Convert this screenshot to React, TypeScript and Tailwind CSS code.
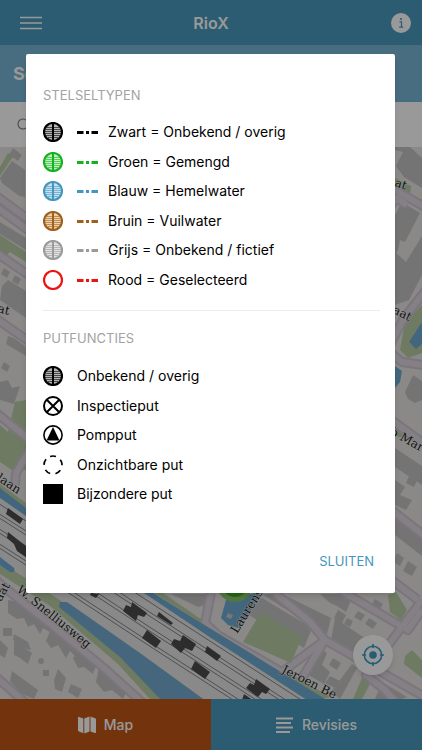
import React from "react";

const systemTypes = [
  { color: "#000000", fill: "#b5b5b5", label: "Zwart = Onbekend / overig" },
  { color: "#14b31c", fill: "#c4efc4", label: "Groen = Gemengd" },
  { color: "#4596bf", fill: "#c8e2f0", label: "Blauw = Hemelwater" },
  { color: "#a0601c", fill: "#ecd3b0", label: "Bruin = Vuilwater" },
  { color: "#9b9b9b", fill: "#e2e2e2", label: "Grijs = Onbekend / fictief" },
  { color: "#ee1313", fill: "", label: "Rood = Geselecteerd" },
];

function HatchedCircle({ color, fill }: { color: string; fill: string }) {
  return (
    <svg className="size-5 shrink-0" viewBox="0 0 20 20" aria-hidden="true">
      <circle cx="10" cy="10" r="9" fill={fill || "none"} stroke={color} strokeWidth="2.2" />
      {fill && (
        <>
          <path d="M4 5.5h12M3 7.5h14M2 9.5h16M2 11.5h16M3 13.5h14M5 15.5h10" stroke={color} strokeWidth="0.6" />
          <path d="M10 1v18" stroke={color} strokeWidth="2" />
        </>
      )}
    </svg>
  );
}

function DashLine({ color }: { color: string }) {
  return (
    <svg className="w-[21px] h-5 shrink-0" viewBox="0 0 21 20" aria-hidden="true">
      <path d="M0 10.5h6.5M9 10.5h3M14.5 10.5h6.5" stroke={color} strokeWidth="3" />
    </svg>
  );
}

const manholes = [
  { label: "Onbekend / overig", icon: <HatchedCircle color="#000000" fill="#b5b5b5" /> },
  {
    label: "Inspectieput",
    icon: (
      <svg className="size-5 shrink-0" viewBox="0 0 20 20" fill="none" stroke="#000" strokeWidth="2">
        <circle cx="10" cy="10" r="9" />
        <path d="M4 4l12 12M16 4L4 16" />
      </svg>
    ),
  },
  {
    label: "Pompput",
    icon: (
      <svg className="size-5 shrink-0" viewBox="0 0 20 20" fill="none" stroke="#000" strokeWidth="1.6">
        <circle cx="10" cy="10" r="9.1" />
        <path d="M10 2l6.5 13.5h-13z" fill="#000" stroke="none" />
      </svg>
    ),
  },
  {
    label: "Onzichtbare put",
    icon: (
      <svg className="size-5 shrink-0" viewBox="0 0 20 20" fill="none" stroke="#000" strokeWidth="1.7">
        <circle cx="10" cy="10" r="9" strokeDasharray="6 5.31" transform="rotate(-109 10 10)" />
      </svg>
    ),
  },
  {
    label: "Bijzondere put",
    icon: (
      <svg className="size-5 shrink-0" viewBox="0 0 20 20">
        <path d="M0 0h20v20H0z" />
      </svg>
    ),
  },
];

const greens = [
  "M0 167L8 153L14 155L0 176z",
  "M0 235L26 252V262L10 252L0 262z",
  "M15 402L26 400V470L12 470L0 462V425L8 432z",
  "M0 484L26 503L160 591L211 626L330 697L322 699L0 496z",
  "M49 593L61 601L120 656L162 699L150 699L118 664L50 606L0 574V562z",
  "M388 595L396 592L407 610L401 620L390 612z",
  "M364 673L374 676L362 699L353 699z",
  "M405 656L412 650L422 660V678L404 664z",
  "M395 178L411 186L410 194L395 186z",
  "M400 350L405 322L422 305V353L408 358z",
  "M395 428L405 432L414 440L395 436z",
];

const buildings = [
  "M0 178L12 161L25 170V197L19 196L2 183z",
  "M13 148L22 155L18 161L9 155z",
  "M0 222L26 238V250L0 234z",
  "M4 268l6 4-3 6-6-4z",
  "M15 275l6 4-3 6-6-4z",
  "M2 286L8 280L26 291V318L0 300z",
  "M8 336L14 338L26 347V356L6 344z",
  "M4 362l6 4-3 6-6-4z",
  "M0 382L8 380L12 388L20 386L14 404L0 400z",
  "M8 600L24 603L53 624L50 632L43 628L40 634L34 624L28 627L24 618L17 619L8 613z",
  "M53 624L84 648L77 658L70 651L66 658L58 645L51 648L46 641z",
  "M84 648L98 661L93 674L84 667L78 668L73 658z",
  "M100 663L128 688L123 699L112 690L104 692L96 682z",
  "M14 641L32 653L28 664L20 658L14 655z",
  "M12 671L38 690L34 699L20 693L10 681z",
  "M0 640L8 648L5 658L0 655z",
  "M58 669L66 678L62 692L55 689L54 680z",
  "M3 628h9v8h-9z",
  "M14 634l14 8 3 8-8-2-10-8z",
  "M71 684l11 5-4 9-10-6z",
  "M38 661a3 3 0 1 0 6 0a3 3 0 1 0-6 0z",
  "M43 670h6v6h-6z",
  "M171 594L206 594L208 604L198 607z",
  "M262 594L282 594L331 618L327 634L310 627L290 612z",
  "M262 598L312 628L304 648L244 612z",
  "M335 618L388 654L380 673L352 660L330 646z",
  "M320 594L344 594L351 600L346 612L337 606L330 603z",
  "M338 610l8 5-4 8-8-5z",
  "M347 618l6 3-3 6-6-3z",
  "M358 611l7 4-4 6-7-4z",
  "M369 618l8 5-4 6-8-5z",
  "M375 599l8 5-4 7-8-5z",
  "M317 646L327 653L322 665L330 672L324 684L303 672z",
  "M333 658l8 5-4 7-8-5z",
  "M330 676l10 5-5 7-10-5z",
  "M352 664L357 668L340 699L331 692z",
  "M382 682L407 697L402 699L375 699z",
  "M395 150L403 152L396 166L404 177L422 188V158L410 147H395z",
  "M402 202L420 213L405 242L400 240L398 250L395 255V215z",
  "M395 305V252L406 262L422 236V275L409 300z",
  "M405 392L413 375L422 381V400L415 403L408 399z",
  "M395 448L422 466V485L395 467z",
  "M395 480L405 487L400 495L412 500L406 510L395 505z",
  "M409 476l8 4-3 7-8-4z",
  "M395 517L422 535V556L395 535z",
  "M397 553l7 5-4 8-7-4z",
  "M408 561l9 6-5 9-9-5z",
];

const roads = [
  "M-5 195L35 224",
  "M-5 206L35 235",
  "M-5 252L30 276",
  "M-5 318L30 342",
  "M-5 412L30 440",
  "M15 485L16 473L30 450",
  "M-5 579L5 588L58 630L104 668L145 705",
  "M-5 676L28 705",
  "M211 593L205 623L218 635L282 672L325 640L430 700",
  "M275 593L310 622L325 640L302 678",
  "M340 590L408 630L422 610",
  "M398 705L385 690L366 675L422 600",
  "M395 190L430 210",
  "M385 212L397 198L407 205",
  "M390 345L404 318L430 285",
  "M390 352L402 362L430 366",
  "M386 416L430 448",
  "M385 505L430 540",
  "M385 575L418 600",
];

const tracks = [3, 13, 17, 28, 32, 43, 47];

const wagons = [
  "M8 508L23 519L20 524L6 514z",
  "M8 532L27 547V558L17 551L14 544L7 538z",
  "M91 593L99 594L96 598L90 595z",
  "M132 602L147 613L144 617L138 615L136 621L123 611L126 605L131 607z",
  "M159 612L173 623L171 625L157 616z",
  "M147 630L161 641L156 648L142 638z",
  "M183 635L196 644L192 651L185 648L181 653L171 644L174 639L180 641z",
  "M195 661L210 672L205 679L191 669z",
  "M207 646L221 656L217 661L205 652z",
  "M256 679L270 689L266 694L262 692L258 697L246 688L250 683L254 685z",
  "M244 694L257 703H241z",
];

function StreetMap() {
  return (
    <svg
      className="size-full"
      viewBox="0 147 422 552"
      preserveAspectRatio="xMidYMid slice"
      role="img"
      aria-label="Kaart"
    >
      <path d="M0 147h422v552H0z" fill="#e6e4e3" />
      {greens.map((d) => (
        <path key={d} d={d} fill="#b7cda4" />
      ))}
      {buildings.map((d) => (
        <path key={d} d={d} fill="#c4c2c1" />
      ))}
      {roads.map((d) => (
        <path key={d} d={d} fill="none" stroke="#cdc3cf" strokeWidth="10" strokeLinejoin="round" />
      ))}
      {roads.map((d) => (
        <path key={d} d={d} fill="none" stroke="#ddd5de" strokeWidth="6" strokeLinejoin="round" />
      ))}
      <path d="M261 612L302 637L291 663L243 642z" fill="#b7cda4" />

      {/* Railway yard */}
      <path d="M0 498L26 516L151 597L340 712L230 712L140 652L67 599L0 556z" fill="#e4e4e4" />
      {tracks.map((y) => (
        <path
          key={y}
          d={`M-10 ${495 + y}L26 ${518 + y}L151 ${600 + y}L340 ${722 + y}`}
          fill="none"
          stroke="#85858a"
          strokeWidth="1"
        />
      ))}
      {wagons.map((d) => (
        <path key={d} d={d} fill="#4b4b4b" />
      ))}

      {/* Water */}
      <path d="M0 488L26 508L153 593L211 629L330 702H310L211 638L150 597L26 516L0 498z" fill="#6fabd0" />
      <path d="M60 602L67 602L140 653L206 701H162L120 657L59 607z" fill="#74abd0" />
      <path d="M0 557L14 568Q16 573 10 572L0 565z" fill="#6fabd8" />
      <path d="M226 600L255 593L260 596L238 628L228 625L221 618z" fill="#6fabd0" />
      <path d="M395 366L402 371L400 382L395 388z" fill="#6fabd0" />
      <path d="M409 342L422 322V344L416 349z" fill="#6fabd0" />
      <circle cx="235" cy="584" r="18" fill="#89c96a" />
      <circle cx="235" cy="584" r="13" fill="#42a928" />
      <path d="M228 613l5 2-2 4-5-2z" fill="#c8c6c5" />

      {/* Street names */}
      <g
        fill="#222"
        stroke="#eee"
        strokeWidth="1"
        paintOrder="stroke"
        fontFamily="'DejaVu Serif', serif"
        fontSize="12"
      >
        <text transform="translate(16 591) rotate(39)">W. Snelliusweg</text>
        <text transform="translate(-4 480) rotate(33)">laan</text>
        <text transform="translate(-3 312) rotate(14)">at</text>
        <text transform="translate(1 602) rotate(-61)">aat</text>
        <text transform="translate(394 186) rotate(18)">at</text>
        <text transform="translate(387 310) rotate(27)">raat</text>
        <text transform="translate(389 434) rotate(29)">b Mar</text>
        <text transform="translate(237 634) rotate(-58)">Laurens</text>
        <text transform="translate(281 672) rotate(27)">Jeroen Be</text>
      </g>
    </svg>
  );
}

export default function App() {
  return (
    <div className="relative h-screen flex flex-col font-['Inter','Liberation_Sans',sans-serif] overflow-hidden">
      <header className="h-[45px] shrink-0 bg-[#4899be] text-white grid grid-cols-3 items-center px-[11px]">
        <button aria-label="Menu" className="justify-self-start ml-[9px]">
          <svg className="w-[22px] h-[14px]" viewBox="0 0 22 14" stroke="currentColor" strokeWidth="1.5">
            <path d="M0 1.5h22M0 7h22M0 12.5h22" />
          </svg>
        </button>
        <h1 className="text-center text-base leading-6 font-semibold">RioX</h1>
        <button aria-label="Informatie" className="justify-self-end">
          <svg className="size-5" viewBox="0 0 20 20">
            <circle cx="10" cy="10" r="10" fill="#fff" />
            <circle cx="10" cy="6" r="1.1" fill="#4899be" />
            <path d="M8.5 8.8h2v5.2M8.2 14.2h4" fill="none" stroke="#4899be" strokeWidth="1.2" />
          </svg>
        </button>
      </header>

      <div className="h-[57px] shrink-0 bg-[#78b4d5] px-[13px] flex items-center">
        <h2 className="text-white text-lg font-bold">Se</h2>
      </div>

      <div className="h-[45px] shrink-0 bg-white px-4 flex items-center">
        <svg className="size-4" viewBox="0 0 16 16" fill="none" stroke="#777" strokeWidth="1.1">
          <circle cx="7" cy="7" r="5" />
          <path d="M10.5 10.5l4 4" />
        </svg>
      </div>

      <main className="relative flex-1 min-h-0">
        <StreetMap />
        <button
          aria-label="Mijn locatie"
          className="absolute right-[29px] bottom-6 size-10 rounded-full bg-white shadow-md flex items-center justify-center"
        >
          <svg className="size-[22px]" viewBox="0 0 22 22" fill="none" stroke="#3c9cc4" strokeWidth="1.6">
            <circle cx="11" cy="11" r="8.7" />
            <circle cx="11" cy="11" r="3.8" fill="#3c9cc4" stroke="none" />
            <path d="M11 0v4M11 18v4M0 11h4M18 11h4" />
          </svg>
        </button>
      </main>

      <nav className="h-[51px] shrink-0 grid grid-cols-2 text-white text-sm font-medium">
        <button className="bg-[#c05817] flex items-center justify-center gap-2">
          <svg className="w-[18px] h-[18px]" viewBox="0 0 18 18" fill="currentColor">
            <path d="M0 1.5Q0 .4 1 .9L5.3 2.5V17.2L1 15.5Q0 15.2 0 14zM6.3 2.5L11.5 .5V15.5L6.3 17.5zM12.5 .5L17 2.3Q18 2.6 18 3.6V16.2Q18 17.4 17 17L12.5 15.4z" />
          </svg>
          Map
        </button>
        <button className="bg-[#4899be] flex items-center justify-center gap-2">
          <svg className="w-[18px] h-[18px]" viewBox="0 0 18 18" stroke="currentColor" strokeWidth="1.8">
            <path d="M0 2.5h17M0 7h15M0 11.5h17M0 16h14" />
          </svg>
          Revisies
        </button>
      </nav>

      {/* Legend dialog */}
      <div className="absolute inset-0 bg-black/40 flex items-start justify-center pl-[26px] pr-[27px] pt-[54px]">
        <section
          role="dialog"
          aria-label="Legenda"
          className="w-full bg-white rounded-[2px] shadow-md pl-[17px] pr-[15px] pt-8 pb-4 text-black"
        >
          <h3 className="text-[13px] leading-[18px] text-[#a3a3a3]">STELSELTYPEN</h3>
          <ul className="mt-[18px] min-h-[168px] flex flex-col justify-between text-sm leading-5">
            {systemTypes.map((type) => (
              <li key={type.label} className="flex items-center">
                <HatchedCircle color={type.color} fill={type.fill} />
                <span className="ml-[14px] mr-[10px]">
                  <DashLine color={type.color} />
                </span>
                {type.label}
              </li>
            ))}
          </ul>

          <hr className="mt-5 border-[#ececec]" />

          <h3 className="mt-[18px] text-[13px] leading-[18px] text-[#a3a3a3]">PUTFUNCTIES</h3>
          <ul className="mt-[19px] min-h-[138px] flex flex-col justify-between text-sm leading-5">
            {manholes.map((item) => (
              <li key={item.label} className="flex items-center gap-[14px]">
                {item.icon}
                {item.label}
              </li>
            ))}
          </ul>

          <div className="mt-[41px] flex justify-end">
            <button className="px-[6px] py-1 text-[13px] leading-6 text-[#4596bf]">SLUITEN</button>
          </div>
        </section>
      </div>
    </div>
  );
}
